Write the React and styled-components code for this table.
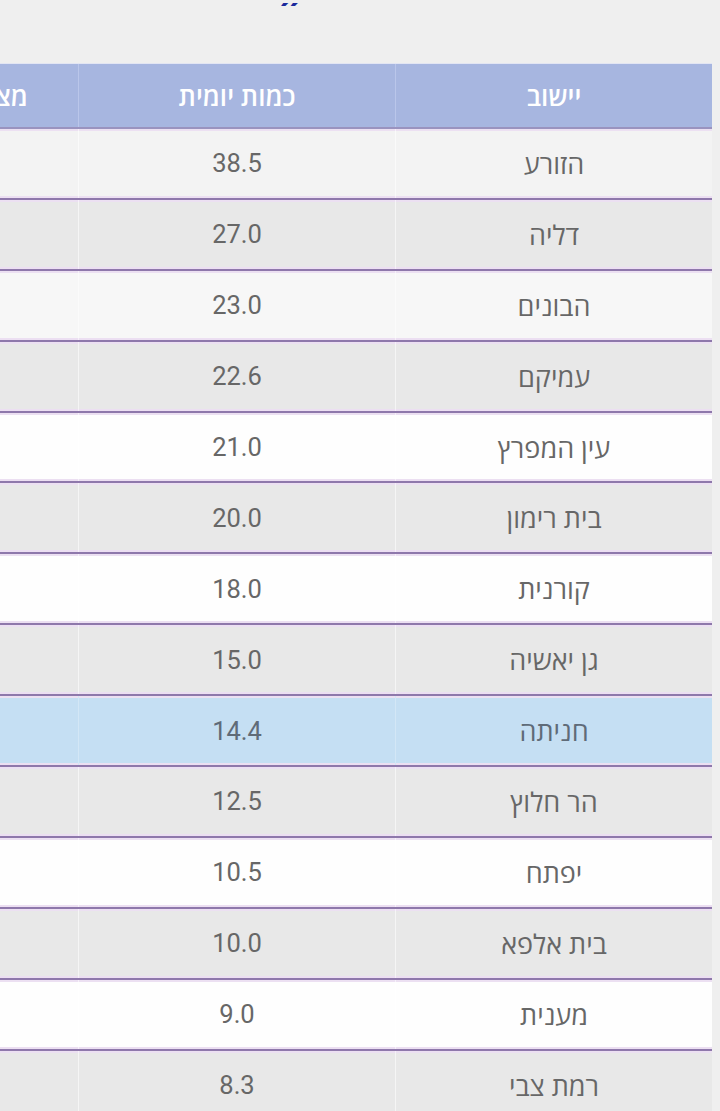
import React from 'react'
import styled, { createGlobalStyle } from 'styled-components'

const GlobalStyle = createGlobalStyle`
  html, body {
    margin: 0;
    padding: 0;
    background: #efefef;
    overflow: hidden;
  }
`

const Page = styled.div`
  direction: rtl;
  width: 720px;
  height: 1111px;
  overflow: hidden;
  font-family: Roboto, "Open Sans", "Liberation Sans", sans-serif;
`

const TitleClip = styled.div`
  height: 6px;
  overflow: hidden;
  display: flex;
  justify-content: center;
  align-items: flex-end;
  padding-right: 144px;
`

const TitleMark = styled.span`
  display: block;
  font-family: "DejaVu Sans", sans-serif;
  font-weight: bold;
  font-size: 36px;
  line-height: 36px;
  margin-bottom: -23px;
  color: #1b2a9c;
`

const TableWrap = styled.div`
  margin-top: 57px;
  padding-right: 8px;
`

const Table = styled.div`
  width: 982px;
  border-top: 1px solid #e2e5f3;
`

const columns = '317px 317px 348px'

const HeadRow = styled.div`
  display: grid;
  grid-template-columns: ${columns};
  height: 63px;
  background: #a7b6e0;
  border-bottom: 2px solid #9a93bf;
`

const HeadCell = styled.div`
  display: flex;
  align-items: center;
  justify-content: center;
  color: #ffffff;
  font-family: "Open Sans", "Liberation Sans", sans-serif;
  font-weight: 600;
  font-size: 26px;
  white-space: nowrap;
  border-left: 1px solid #bac6ea;
`

const Row = styled.div`
  display: grid;
  grid-template-columns: ${columns};
  height: 68.9px;
  background: ${p => p.bg};
  border-bottom: 2px solid #8e78ab;
  box-shadow: inset 0 2px 0 #ece0f2, inset 0 -2px 0 #ecdff2;
`

const Cell = styled.div`
  display: flex;
  align-items: center;
  justify-content: center;
  color: ${p => (p.hi ? '#5f6b78' : '#676767')};
  font-size: 25.5px;
  border-left: 1px solid ${p => (p.hi ? '#d3e7f6' : 'rgba(255,255,255,0.55)')};
`

const PlaceCell = styled(Cell)`
  font-family: "Open Sans", "Liberation Sans", sans-serif;
  font-size: 27px;
`

const rows = [
  { place: 'הזורע', amount: '38.5', bg: '#f3f3f3' },
  { place: 'דליה', amount: '27.0', bg: '#e8e8e8' },
  { place: 'הבונים', amount: '23.0', bg: '#f7f7f7' },
  { place: 'עמיקם', amount: '22.6', bg: '#e8e8e8' },
  { place: 'עין המפרץ', amount: '21.0', bg: '#fefefe' },
  { place: 'בית רימון', amount: '20.0', bg: '#e8e8e8' },
  { place: 'קורנית', amount: '18.0', bg: '#fefefe' },
  { place: 'גן יאשיה', amount: '15.0', bg: '#e8e8e8' },
  { place: 'חניתה', amount: '14.4', bg: '#c5dff3', hi: true },
  { place: 'הר חלוץ', amount: '12.5', bg: '#e8e8e8' },
  { place: 'יפתח', amount: '10.5', bg: '#fefefe' },
  { place: 'בית אלפא', amount: '10.0', bg: '#e8e8e8' },
  { place: 'מענית', amount: '9.0', bg: '#fefefe' },
  { place: 'רמת צבי', amount: '8.3', bg: '#e8e8e8' },
]

export default function App() {
  return (
    <Page>
      <GlobalStyle />
      <TitleClip>
        <TitleMark>״</TitleMark>
      </TitleClip>
      <TableWrap>
        <Table>
          <HeadRow>
            <HeadCell>יישוב</HeadCell>
            <HeadCell>כמות יומית</HeadCell>
            <HeadCell>מצטבר מתחילת העונה</HeadCell>
          </HeadRow>
          {rows.map(r => (
            <Row key={r.place} bg={r.bg}>
              <PlaceCell hi={r.hi}>{r.place}</PlaceCell>
              <Cell hi={r.hi}>{r.amount}</Cell>
              <Cell hi={r.hi} />
            </Row>
          ))}
        </Table>
      </TableWrap>
    </Page>
  )
}
